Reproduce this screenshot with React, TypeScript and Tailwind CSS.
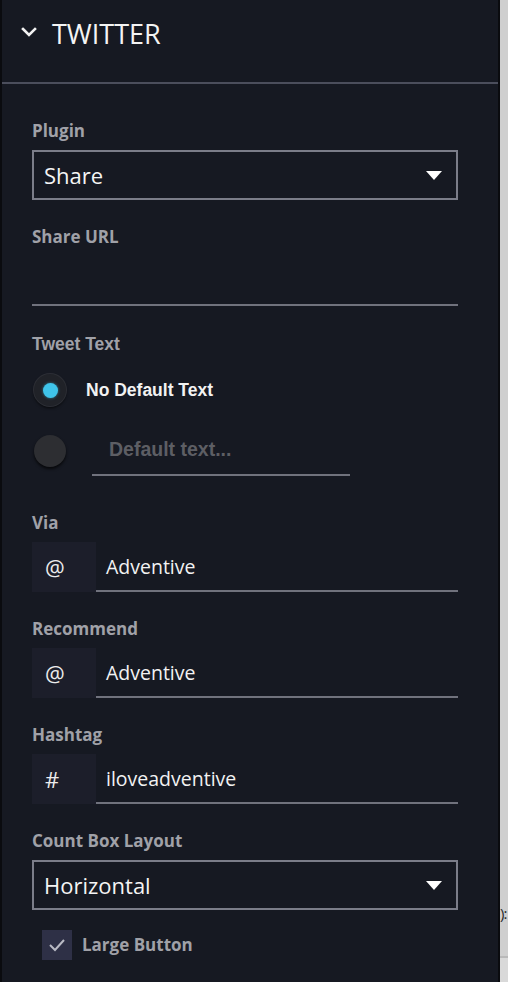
import type { ReactNode } from 'react'

const sans = "font-['Open_Sans',sans-serif]"
const arial = "font-['Liberation_Sans',Arial,sans-serif]"

export default function App() {
  return (
    <div className="flex h-[982px] w-[508px] overflow-hidden bg-[#cfcfcf]">
      <div className={`flex h-full w-[500px] shrink-0 flex-col border-x-2 border-[#0a0b0f] bg-[#161922] ${sans}`}>
        {/* header */}
        <div className="flex h-[84px] items-start border-b-2 border-[#4b4e5c] pt-[16px]">
          <div className="flex h-[36px] w-[50px] items-center justify-center pb-[4px] pl-[4px]">
            <svg width="16" height="10" viewBox="0 0 16 10" fill="none">
              <polyline points="2,2 8,8 14,2" stroke="#f2f2f2" strokeWidth="2.6" strokeLinecap="square" />
            </svg>
          </div>
          <span className="text-[27px] leading-[36px] text-[#f4f4f4]">TWITTER</span>
        </div>

        <div className="flex w-[456px] flex-col pl-[30px]">
          <Label className="mt-[35px]">Plugin</Label>
          <Select className="mt-[7px]" value="Share" />

          <Label className="mt-[25px]">Share URL</Label>
          <div className="h-[57px] w-[426px] border-b-2 border-[#70727d]" />

          <div className={`mt-[26px] text-[17.5px] font-bold leading-6 text-[#a0a1a8] ${arial}`}>Tweet Text</div>

          {/* radio: none */}
          <div className="mt-[14px] flex h-[40px] items-center">
            <Radio checked />
            <span className={`ml-[20px] text-[17.5px] font-bold text-[#f2f2f2] ${arial}`}>No Default Text</span>
          </div>

          {/* radio: custom text */}
          <div className="flex h-[66px] items-start">
            <div className="mt-[25px]">
              <Radio />
            </div>
            <div className="ml-[26px] h-[66px] w-[258px] border-b-2 border-[#70727d] pl-[17px] pt-[25px]">
              <span className={`text-[19.5px] font-bold leading-[28px] text-[#5d5e64] ${arial}`}>Default text...</span>
            </div>
          </div>

          <Label className="mt-[35px]">Via</Label>
          <PrefixInput className="mt-[7px]" prefix="@" value="Adventive" />

          <Label className="mt-[25px]">Recommend</Label>
          <PrefixInput className="mt-[7px]" prefix="@" value="Adventive" />

          <Label className="mt-[25px]">Hashtag</Label>
          <PrefixInput className="mt-[7px]" prefix="#" value="iloveadventive" />

          <Label className="mt-[25px]">Count Box Layout</Label>
          <Select className="mt-[7px]" value="Horizontal" />

          <div className="mt-[20px] ml-[10px] flex h-[30px] items-center">
            <div className="flex h-[30px] w-[30px] items-center justify-center bg-[#2e3046]">
              <svg width="18" height="14" viewBox="0 0 18 14" fill="none">
                <polyline points="2,7 7,12 16,2" stroke="#b9bac4" strokeWidth="2" />
              </svg>
            </div>
            <span className="ml-[10px] text-[17px] font-bold leading-6 text-[#a0a1a8]">Large Button</span>
          </div>
        </div>
      </div>

      {/* what shows of the page behind */}
      <div className={`flex flex-1 flex-col overflow-hidden ${sans}`}>
        <div className="mt-[902px] whitespace-nowrap text-[15px] leading-[22px] tracking-[-1px] text-[#2a2a2a]">):</div>
        <div className="mt-[32px] h-[2px] w-full bg-[#b9b9b9]" />
        <div className="flex-1 bg-[#d9d9d9]" />
      </div>
    </div>
  )
}

function Label({ className = '', children }: { className?: string; children: ReactNode }) {
  return <div className={`text-[17px] font-bold leading-6 text-[#a0a1a8] ${className}`}>{children}</div>
}

function Select({ className = '', value }: { className?: string; value: string }) {
  return (
    <div className={`flex h-[50px] w-[426px] items-center justify-between border-2 border-[#7b7d89] pl-[10px] pr-[14px] ${className}`}>
      <span className="text-[22px] leading-[30px] text-[#f4f4f4]">{value}</span>
      <svg width="16" height="9" viewBox="0 0 16 9">
        <polygon points="0,0 16,0 8,9" fill="#ffffff" />
      </svg>
    </div>
  )
}

function PrefixInput({ className = '', prefix, value }: { className?: string; prefix: string; value: string }) {
  return (
    <div className={`flex h-[50px] w-[426px] ${className}`}>
      <div className="flex w-[64px] items-center bg-[#1c1e2a] pl-[13px] text-[22px] text-[#ececec]">{prefix}</div>
      <div className="flex flex-1 items-center border-b-2 border-[#70727d] pl-[10px] pt-[2px] text-[19.5px] text-[#f2f2f2]">
        {value}
      </div>
    </div>
  )
}

function Radio({ checked = false }: { checked?: boolean }) {
  return (
    <div
      className={`ml-[2px] flex h-[32px] w-[32px] items-center justify-center rounded-full shadow-[0_2px_3px_rgba(0,0,0,0.7)] ${
        checked ? 'bg-[#202228] ring-1 ring-[#2c2e35]' : 'bg-[#2d2e32]'
      }`}
    >
      {checked && <div className="h-[15px] w-[15px] rounded-full bg-[#3fc4ea] shadow-[0_0_3px_rgba(63,196,234,0.6)]" />}
    </div>
  )
}
